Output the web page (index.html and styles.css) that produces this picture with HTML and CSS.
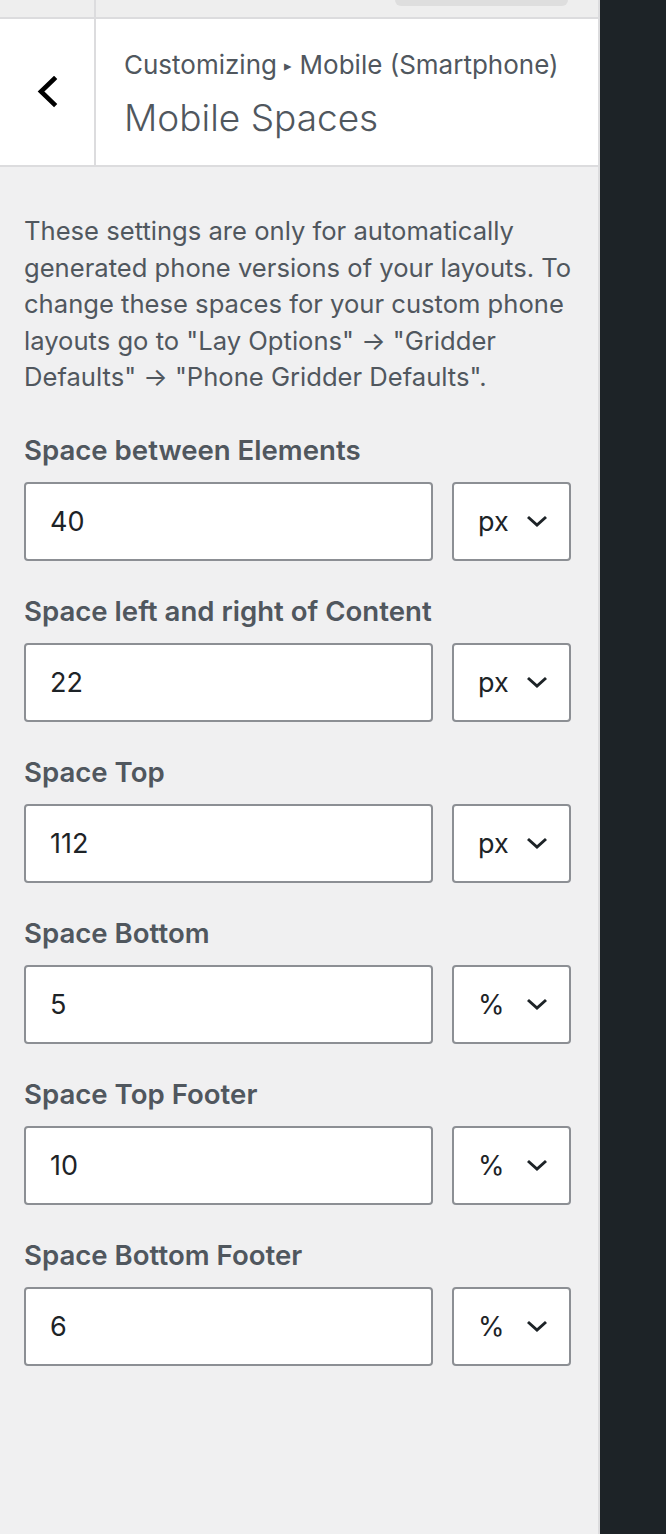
FILE: index.html
```html
<!DOCTYPE html>
<html lang="en">
<head>
  <meta charset="UTF-8">
  <title>Mobile Spaces</title>
  <link rel="stylesheet" href="styles.css">
</head>
<body>
<div class="screen">
  <div class="sidebar">
    <div class="topbar">
      <div class="topbar-close"></div>
      <div class="topbar-main">
        <span class="topbar-btn"></span>
      </div>
    </div>

    <div class="section-head">
      <button class="back" type="button" aria-label="Back">
        <svg width="22" height="32" viewBox="0 0 22 32">
          <polyline points="17,3 4,15.5 17,28" fill="none" stroke="#000" stroke-width="4.6" stroke-linecap="square"/>
        </svg>
      </button>
      <div class="section-title">
        <span class="crumbs">Customizing <span class="sep">&#9656;</span> Mobile (Smartphone)</span>
        <h1>Mobile Spaces</h1>
      </div>
    </div>

    <div class="controls">
      <p class="desc">These settings are only for automatically generated phone versions of your layouts. To change these spaces for your custom phone layouts go to "Lay Options" &#8594; "Gridder Defaults" &#8594; "Phone Gridder Defaults".</p>

      <div class="field">
        <label>Space between Elements</label>
        <div class="field-row">
          <input class="num" type="text" value="40">
          <div class="unit">px<svg class="caret" viewBox="0 0 22 12"><polyline points="2,2 11,10 20,2"/></svg></div>
        </div>
      </div>

      <div class="field">
        <label>Space left and right of Content</label>
        <div class="field-row">
          <input class="num" type="text" value="22">
          <div class="unit">px<svg class="caret" viewBox="0 0 22 12"><polyline points="2,2 11,10 20,2"/></svg></div>
        </div>
      </div>

      <div class="field">
        <label>Space Top</label>
        <div class="field-row">
          <input class="num" type="text" value="112">
          <div class="unit">px<svg class="caret" viewBox="0 0 22 12"><polyline points="2,2 11,10 20,2"/></svg></div>
        </div>
      </div>

      <div class="field">
        <label>Space Bottom</label>
        <div class="field-row">
          <input class="num" type="text" value="5">
          <div class="unit">%<svg class="caret" viewBox="0 0 22 12"><polyline points="2,2 11,10 20,2"/></svg></div>
        </div>
      </div>

      <div class="field">
        <label>Space Top Footer</label>
        <div class="field-row">
          <input class="num" type="text" value="10">
          <div class="unit">%<svg class="caret" viewBox="0 0 22 12"><polyline points="2,2 11,10 20,2"/></svg></div>
        </div>
      </div>

      <div class="field">
        <label>Space Bottom Footer</label>
        <div class="field-row">
          <input class="num" type="text" value="6">
          <div class="unit">%<svg class="caret" viewBox="0 0 22 12"><polyline points="2,2 11,10 20,2"/></svg></div>
        </div>
      </div>
    </div>
  </div>
  <div class="preview"></div>
</div>
</body>
</html>
```

FILE: styles.css
```css
body {
  margin: 0;
  background: #1d2327;
  font-family: Inter, "Noto Sans", sans-serif;
}

.screen {
  display: flex;
  height: 100vh;
  overflow: hidden;
}

.sidebar {
  width: 598px;
  flex: none;
  background: #f0f0f1;
  border-right: 2px solid #dcdcde;
}

.preview {
  flex: 1;
  background: #1d2327;
}

/* header strip, mostly scrolled off */
.topbar {
  display: flex;
  height: 17px;
  background: #eeeeee;
  border-bottom: 2px solid #dcdcde;
}

.topbar-close {
  width: 94px;
  border-right: 2px solid #dcdcde;
}

.topbar-main {
  flex: 1;
  display: flex;
  justify-content: flex-end;
  padding-right: 30px;
}

.topbar-btn {
  width: 173px;
  height: 6px;
  background: #dedede;
  border-radius: 0 0 6px 6px;
}

/* section title */
.section-head {
  display: flex;
  height: 146px;
  background: #fff;
  border-bottom: 2px solid #dcdcde;
}

.back {
  width: 96px;
  flex: none;
  padding: 0;
  border: 0;
  border-right: 2px solid #dcdcde;
  background: #fff;
  display: grid;
  place-items: center;
}

.back svg {
  display: block;
  margin-left: 2px;
}

.section-title {
  padding: 30px 0 0 28px;
  color: #50575e;
}

.crumbs {
  display: block;
  font-size: 26px;
  line-height: 32px;
}

.crumbs .sep {
  font-size: 15px;
  vertical-align: 3px;
}

.section-title h1 {
  margin: 13px 0 0;
  font-size: 37px;
  font-weight: 300;
  line-height: 46px;
  color: #50575e;
}

/* controls */
.controls {
  padding: 46px 24px 0 24px;
}

.desc {
  margin: 0 0 36px;
  font-size: 25.6px;
  line-height: 36.5px;
  color: #50575e;
}

.field {
  margin-bottom: 32px;
}

.field label {
  display: block;
  font-size: 27.6px;
  font-weight: 600;
  line-height: 36px;
  color: #50575e;
  margin-bottom: 14px;
}

.field-row {
  display: flex;
  gap: 19px;
  margin-right: 3px;
}

.num,
.unit {
  box-sizing: border-box;
  height: 79px;
  border: 2px solid #8c8f94;
  border-radius: 4px;
  background: #fff;
  font-family: inherit;
  font-size: 27px;
  color: #1d2327;
}

.num {
  flex: 1;
  min-width: 0;
  padding: 0 0 0 24px;
  outline: none;
}

.unit {
  width: 119px;
  flex: none;
  display: flex;
  align-items: center;
  padding-left: 24px;
}

.caret {
  width: 22px;
  height: 12px;
  margin-left: auto;
  margin-right: 21px;
  fill: none;
  stroke: #1d2327;
  stroke-width: 3;
}
```
